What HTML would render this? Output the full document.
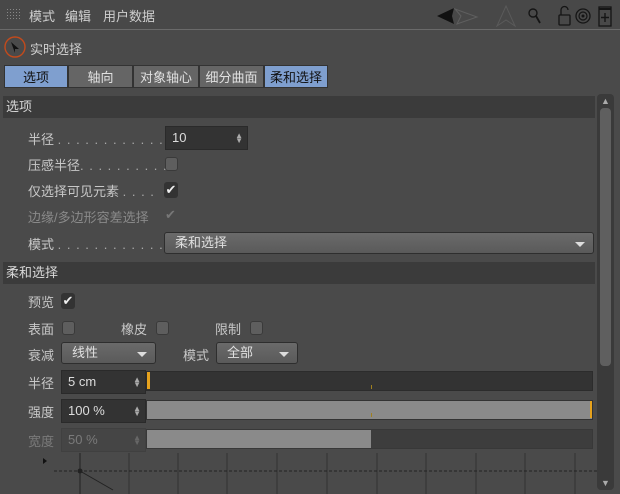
<!DOCTYPE html>
<html><head><meta charset="utf-8"><style>
*{margin:0;padding:0;box-sizing:border-box}
body{width:620px;height:494px;background:#4a4a4a;font-family:"Liberation Sans","Noto Sans CJK SC",sans-serif;font-size:13px;color:#d0d0d0;position:relative;overflow:hidden}
.a{position:absolute;white-space:nowrap}
.hdr{position:absolute;left:3px;width:592px;height:22px;background:#3b3b3b;color:#d8d8d8;padding-left:3px;line-height:22px}
.lbl{color:#c8c8c8}
.dots{color:#aaa;letter-spacing:1px}
.cb{position:absolute;width:13px;height:14px;border-radius:3px;background:#5e5e5e;border:1px solid #3a3a3a}
.cbk{position:absolute;width:14px;height:16px;border-radius:3px;background:#333;color:#eee;font-size:13px;line-height:16px;text-align:center}
.fld{position:absolute;background:#333;border:1px solid #2a2a2a;color:#ddd;padding-left:6px;line-height:22px;height:24px}
.dd{position:absolute;background:linear-gradient(#6a6a6a,#5a5a5a);border:1px solid #2e2e2e;border-radius:3px;color:#e0e0e0;padding-left:10px;height:22px;line-height:20px}
.dd:after{content:"";position:absolute;right:8px;top:9px;border-left:5px solid transparent;border-right:5px solid transparent;border-top:5px solid #ddd}
.tab{position:absolute;top:65px;height:23px;line-height:23px;text-align:center;background:#656565;border:1px solid #333;color:#e0e0e0}
.sp{position:absolute;right:4px;top:6px;color:#aaa;font-size:8px;line-height:5px}
</style></head><body>
<div class="a" style="left:0;top:0;width:620px;height:30px;background:#484848;border-bottom:1px solid #6a6a6a"></div>
<div class="a" style="left:7px;top:9px;width:14px;height:12px;background:repeating-linear-gradient(90deg,#999 0 1px,transparent 1px 3px),transparent;opacity:.8;-webkit-mask:repeating-linear-gradient(#000 0 1px,transparent 1px 3px)"></div>
<div class="a" style="left:29px;top:6px;color:#cfcfcf">模式</div>
<div class="a" style="left:65px;top:6px;color:#cfcfcf">编辑</div>
<div class="a" style="left:103px;top:6px;color:#cfcfcf">用户数据</div>
<svg class="a" style="left:435px;top:3px" width="185" height="26">
<polygon points="2,13 19,5 17,13 19,21" fill="#111"/>
<polygon points="20,6 42,14 22,21 26,13" fill="none" stroke="#5f5f5f"/>
<polygon points="62,23 71,3 80,23 71,17" fill="none" stroke="#5a5a5a"/>
<circle cx="98" cy="10" r="4" fill="none" stroke="#151515" stroke-width="1.4"/><line x1="101" y1="13" x2="105" y2="20" stroke="#151515" stroke-width="1.8"/>
<rect x="124" y="12" width="11" height="10" rx="1" fill="none" stroke="#151515" stroke-width="1.3"/><path d="M126 12 V7 a3.5 3.5 0 0 1 7 0" fill="none" stroke="#151515" stroke-width="1.3"/>
<circle cx="148" cy="13" r="7" fill="none" stroke="#151515" stroke-width="1.3"/><circle cx="148" cy="13" r="4" fill="none" stroke="#151515" stroke-width="1.2"/><circle cx="148" cy="13" r="1.5" fill="#151515"/>
<rect x="164" y="4" width="12" height="19" fill="none" stroke="#151515" stroke-width="1.3"/><line x1="164" y1="6" x2="176" y2="6" stroke="#151515" stroke-width="2"/><path d="M170 10 v9 M166 14.5 h8" stroke="#151515" stroke-width="1.4"/>
</svg>
<svg class="a" style="left:4px;top:36px" width="22" height="22"><circle cx="11" cy="11" r="10" fill="none" stroke="#c24a1c" stroke-width="1.4"/><polygon points="7,6 15,13 11,13 11,17" fill="#111"/></svg>
<div class="a" style="left:30px;top:39px;color:#d0d0d0">实时选择</div>
<div class="tab" style="left:4px;width:64px;background:#7f9fcf;color:#111">选项</div>
<div class="tab" style="left:68px;width:65px">轴向</div>
<div class="tab" style="left:133px;width:66px">对象轴心</div>
<div class="tab" style="left:199px;width:65px">细分曲面</div>
<div class="tab" style="left:264px;width:64px;background:#7f9fcf;color:#111">柔和选择</div>
<div class="hdr" style="top:96px">选项</div>
<div class="a lbl" style="left:28px;top:129px">半径 <span class="dots">. . . . . . . . . . . .</span></div>
<div class="fld" style="left:165px;top:126px;width:83px">10<span class="sp">▲<br>▼</span></div>
<div class="a lbl" style="left:28px;top:155px">压感半径<span class="dots">. . . . . . . . . .</span></div>
<div class="cb" style="left:165px;top:157px"></div>
<div class="a lbl" style="left:28px;top:181px">仅选择可见元素 <span class="dots">. . . .</span></div>
<div class="cbk" style="left:164px;top:182px">✔</div>
<div class="a" style="left:28px;top:207px;color:#8a8a8a">边缘/多边形容差选择</div>
<div class="a" style="left:165px;top:207px;color:#777">✔</div>
<div class="a lbl" style="left:28px;top:234px">模式 <span class="dots">. . . . . . . . . . . .</span></div>
<div class="dd" style="left:164px;top:232px;width:430px">柔和选择</div>
<div class="hdr" style="top:262px">柔和选择</div>
<div class="a lbl" style="left:28px;top:292px">预览</div>
<div class="cbk" style="left:61px;top:293px">✔</div>
<div class="a lbl" style="left:28px;top:319px">表面</div><div class="cb" style="left:62px;top:321px"></div>
<div class="a lbl" style="left:121px;top:319px">橡皮</div><div class="cb" style="left:156px;top:321px"></div>
<div class="a lbl" style="left:215px;top:319px">限制</div><div class="cb" style="left:250px;top:321px"></div>
<div class="a lbl" style="left:28px;top:345px">衰减</div>
<div class="dd" style="left:61px;top:342px;width:95px">线性</div>
<div class="a lbl" style="left:183px;top:345px">模式</div>
<div class="dd" style="left:216px;top:342px;width:82px">全部</div>
<div class="a lbl" style="left:28px;top:373px">半径</div>
<div class="fld" style="left:61px;top:370px;width:85px">5 cm<span class="sp">▲<br>▼</span></div>
<div class="a" style="left:146px;top:371px;width:447px;height:20px;background:#333;border:1px solid #2c2c2c"></div>
<div class="a" style="left:147px;top:372px;width:3px;height:17px;background:#e6a21d"></div>
<div class="a" style="left:371px;top:385px;width:1px;height:4px;background:#a0801e"></div>
<div class="a lbl" style="left:28px;top:402px">强度</div>
<div class="fld" style="left:61px;top:399px;width:85px">100 %<span class="sp">▲<br>▼</span></div>
<div class="a" style="left:146px;top:400px;width:447px;height:20px;background:#8a8a8a;border:1px solid #333"></div>
<div class="a" style="left:590px;top:401px;width:2px;height:17px;background:#e6a21d"></div>
<div class="a" style="left:371px;top:413px;width:1px;height:4px;background:#a0801e"></div>
<div class="a" style="left:28px;top:431px;color:#7a7a7a">宽度</div>
<div class="fld" style="left:61px;top:428px;width:85px;background:#454545;border-color:#404040;color:#7a7a7a">50 %<span class="sp" style="color:#666">▲<br>▼</span></div>
<div class="a" style="left:146px;top:429px;width:447px;height:20px;background:#3d3d3d;border:1px solid #383838"></div>
<div class="a" style="left:147px;top:430px;width:224px;height:18px;background:#8a8a8a"></div>
<svg class="a" style="left:40px;top:453px" width="560" height="41">
<polygon points="3,5 7,8 3,11" fill="#111"/>
<g stroke="#333" stroke-width="1"><line x1="40" y1="0" x2="40" y2="41" stroke="#222"/><line x1="89" y1="0" x2="89" y2="41"/><line x1="138" y1="0" x2="138" y2="41"/><line x1="187" y1="0" x2="187" y2="41"/><line x1="237" y1="0" x2="237" y2="41"/><line x1="287" y1="0" x2="287" y2="41"/><line x1="337" y1="0" x2="337" y2="41"/><line x1="386" y1="0" x2="386" y2="41"/><line x1="436" y1="0" x2="436" y2="41"/><line x1="485" y1="0" x2="485" y2="41"/><line x1="535" y1="0" x2="535" y2="41"/></g>
<line x1="14" y1="18" x2="560" y2="18" stroke="#222" stroke-dasharray="3,2"/>
<line x1="40" y1="18" x2="73" y2="37" stroke="#222"/>
<circle cx="40" cy="18" r="2.5" fill="#222"/>
</svg>
<div class="a" style="left:597px;top:94px;width:17px;height:396px;background:#3a3a3a;border-radius:4px"></div>
<div class="a" style="left:600px;top:108px;width:11px;height:258px;background:#5f5f5f;border-radius:4px"></div>
<div class="a" style="left:601px;top:96px;color:#aaa;font-size:9px">▲</div>
<div class="a" style="left:601px;top:478px;color:#aaa;font-size:9px">▼</div>
</body></html>
